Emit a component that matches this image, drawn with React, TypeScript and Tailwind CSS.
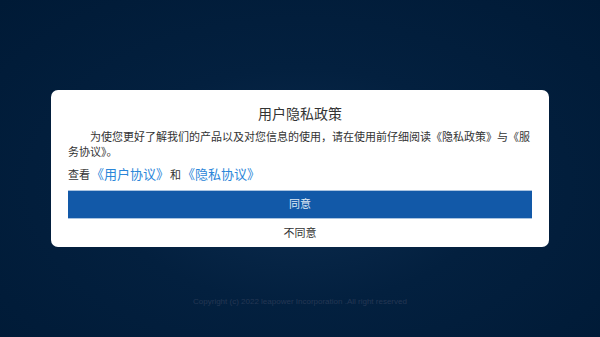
const cjk = { fontFamily: '"Liberation Sans", "Noto Sans CJK SC", sans-serif' };

export default function App() {
  return (
    <div
      className="w-[600px] h-[337px] flex flex-col items-center bg-[radial-gradient(ellipse_at_50%_55%,#0c2c4f_0%,#03203f_45%,#001a36_100%)] overflow-hidden"
      style={cjk}
    >
      <div className="mt-[90px] w-[498px] bg-white rounded-[7px] px-[17px] pt-[14px] pb-[6px] flex flex-col">
        <h3 className="text-center text-[14px] leading-[20px] text-[#333]">用户隐私政策</h3>

        <p className="mt-[6px] text-[11px] leading-[15px] text-[#333] indent-[22px]">
          为使您更好了解我们的产品以及对您信息的使用，请在使用前仔细阅读《隐私政策》与《服务协议》。
        </p>

        <div className="mt-[6px] flex items-center text-[11px] leading-[18px] text-[#333]">
          <span>查看</span>
          <a className="text-[13px] text-[#2b86d9] mx-[1px]">《用户协议》</a>
          <span>和</span>
          <a className="text-[13px] text-[#2b86d9] ml-[1px]">《隐私协议》</a>
        </div>

        <button className="mt-[6px] h-[29px] w-full bg-[#1259a8] border-y border-[#a9c3e0] text-[11px] text-[#dfe9f5]">
          同意
        </button>

        <button className="mt-[6px] h-[16px] text-[11px] leading-[16px] text-[#333]">不同意</button>
      </div>

      <p className="mt-[49px] text-[8px] text-[#243754]">
        Copyright (c) 2022 leapower Incorporation .All right reserved
      </p>
    </div>
  );
}
